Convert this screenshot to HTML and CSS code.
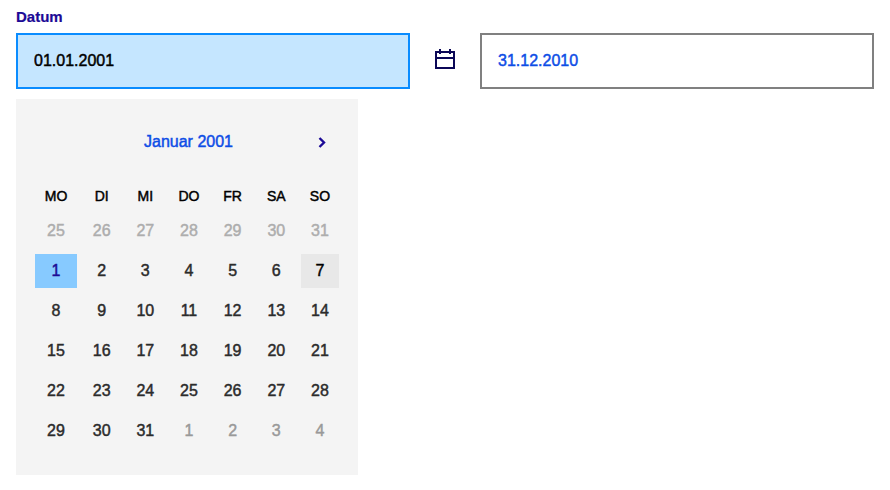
FILE: index.html
```html
<!DOCTYPE html>
<html>
<head>
    <title>Datum</title>
    <link rel="stylesheet" href="styles.css">
</head>
<body>

<div class="date-range">
    <label class="date-label" for="dateFrom">Datum</label>
    <div class="date-inputs">
        <input class="date-input active" id="dateFrom" value="01.01.2001">
        <div class="date-icon">
            <svg width="20" height="20" viewBox="0 0 20 20" fill="none" stroke="#0b0757" stroke-width="2">
                <rect x="1" y="3" width="18" height="16"/>
                <path d="M1 9h18M5 0v5M15 0v5"/>
            </svg>
        </div>
        <input class="date-input" id="dateTo" value="31.12.2010">
    </div>

    <div class="calendar">
        <div class="calendar-header">
            <span class="month-name">Januar 2001</span>
            <button class="next-month">
                <svg width="9" height="11" viewBox="0 0 9 11" fill="none" stroke="#1c0a96" stroke-width="2.4">
                    <path d="M1.5 1l4.5 4.5-4.5 4.5"/>
                </svg>
            </button>
        </div>
        <div class="calendar-grid">
            <div class="weekday">MO</div>
            <div class="weekday">DI</div>
            <div class="weekday">MI</div>
            <div class="weekday">DO</div>
            <div class="weekday">FR</div>
            <div class="weekday">SA</div>
            <div class="weekday">SO</div>

            <div class="day prev">25</div>
            <div class="day prev">26</div>
            <div class="day prev">27</div>
            <div class="day prev">28</div>
            <div class="day prev">29</div>
            <div class="day prev">30</div>
            <div class="day prev">31</div>

            <div class="day selected">1</div>
            <div class="day">2</div>
            <div class="day">3</div>
            <div class="day">4</div>
            <div class="day">5</div>
            <div class="day">6</div>
            <div class="day today">7</div>

            <div class="day">8</div>
            <div class="day">9</div>
            <div class="day">10</div>
            <div class="day">11</div>
            <div class="day">12</div>
            <div class="day">13</div>
            <div class="day">14</div>

            <div class="day">15</div>
            <div class="day">16</div>
            <div class="day">17</div>
            <div class="day">18</div>
            <div class="day">19</div>
            <div class="day">20</div>
            <div class="day">21</div>

            <div class="day">22</div>
            <div class="day">23</div>
            <div class="day">24</div>
            <div class="day">25</div>
            <div class="day">26</div>
            <div class="day">27</div>
            <div class="day">28</div>

            <div class="day">29</div>
            <div class="day">30</div>
            <div class="day">31</div>
            <div class="day next">1</div>
            <div class="day next">2</div>
            <div class="day next">3</div>
            <div class="day next">4</div>
        </div>
    </div>
</div>

</body>
</html>
```

FILE: styles.css
```css
* { margin: 0; padding: 0; box-sizing: border-box; }

body {
    font-family: "Liberation Sans", Arial, sans-serif;
    font-size: 16px;
    background: #fff;
    color: #2b2b2b;
    -webkit-text-stroke: 0.45px;
}

.date-range {
    width: 858px;
    margin-left: 16px;
    padding-top: 9px;
}

.date-label {
    display: block;
    height: 24px;
    line-height: 16px;
    font-size: 15px;
    font-weight: 700;
    color: #1c0a96;
    -webkit-text-stroke: 0.2px;
}

.date-inputs {
    display: flex;
    align-items: center;
}

.date-input {
    width: 394px;
    height: 56px;
    padding: 0 16px;
    border: 2px solid #808080;
    border-radius: 0;
    outline: none;
    background: #fff;
    font-family: inherit;
    font-size: 16px;
    color: #0d4de6;
    -webkit-text-stroke: 0.45px;
}

.date-input.active {
    border-color: #0a8cff;
    background: #c5e6ff;
    color: #000;
}

.date-icon {
    width: 70px;
    padding-bottom: 4px;
    display: flex;
    justify-content: center;
}

.date-icon svg {
    display: block;
}

/* Popup month view */
.calendar {
    width: 342px;
    height: 376px;
    margin-top: 10px;
    padding: 0 19px;
    background: #f4f4f4;
}

.calendar-header {
    height: 85px;
    display: flex;
    align-items: center;
    justify-content: center;
    position: relative;
}

.month-name {
    color: #0d4de6;
    margin-left: 3px;
}

.next-month {
    position: absolute;
    right: 12px;
    top: 38px;
    background: none;
    border: none;
    line-height: 0;
    cursor: pointer;
}

.calendar-grid {
    display: grid;
    grid-template-columns: 42px repeat(6, 38px);
    grid-template-rows: 24px;
    grid-auto-rows: 34px;
    justify-content: space-between;
    row-gap: 6px;
}

.weekday,
.day {
    display: flex;
    align-items: center;
    justify-content: center;
}

.weekday {
    font-size: 14px;
    color: #000;
}

.day.prev { color: #adadad; }
.day.next { color: #999; }

.day.selected {
    background: #87caff;
    color: #1c0a96;
}

.day.today {
    background: #e8e8e8;
    color: #000;
}
```
